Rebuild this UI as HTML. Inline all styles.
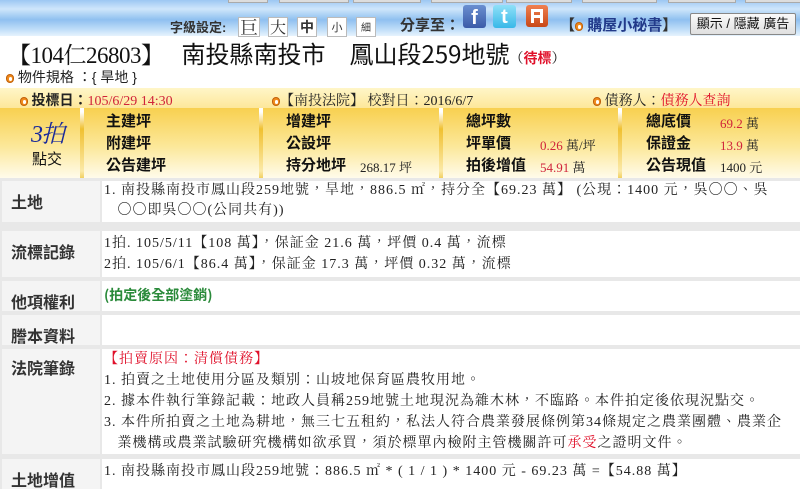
<!DOCTYPE html>
<html><head><meta charset="utf-8"><style>
*{margin:0;padding:0;box-sizing:border-box}
body{width:800px;height:489px;overflow:hidden;background:#fff;font-family:"Liberation Serif","Noto Serif CJK TC","Noto Sans CJK TC",serif;color:#222;position:relative}
.abs{position:absolute;white-space:nowrap}
.top{position:absolute;left:0;top:0;width:800px;height:36px;background:linear-gradient(#9cc7f2 0%,#cfe6fb 25%,#8fc0f0 55%,#bcdcf8 80%,#e6f3fd 100%)}
.tab{position:absolute;top:0;height:3px;background:#ddd;border:1px solid #aaa;border-top:none}
.fb{position:absolute;top:17px;width:20px;height:20px;border:1px solid #bbb;background:#fff;font:14px "Noto Sans CJK TC",sans-serif;text-align:center;line-height:18px;color:#333}
.sans{font-family:"Liberation Sans","Noto Sans CJK TC",sans-serif}
.dot{display:inline-block;width:8px;height:9px;border-radius:4px;background:#f08a1c;border:1px solid #c0600a;vertical-align:middle;position:relative}
.dot:after{content:"";position:absolute;left:2px;top:2px;width:3px;height:4px;background:#fff;border-radius:2px}
.band{position:absolute;left:0;top:88px;width:800px;height:20px;background:linear-gradient(#fff6c8,#fde79a)}
.blk{position:absolute;left:0;top:108px;width:800px;height:70px;background:linear-gradient(#f8d050,#fce89a 55%,#fffbeb)}
.sep{position:absolute;top:108px;width:4px;height:70px;background:linear-gradient(#fff 0,#fff 4px,#f0c030 30%,#fbe9a8 90%,#f2d060)}
.k{font-family:"Liberation Sans","Noto Sans CJK TC",sans-serif;font-weight:bold;font-size:15px;color:#111}
.red{color:#d0233a}
.row{position:absolute;left:0;width:800px;background:#e8e8e8}
.lab{position:absolute;left:2px;top:0;width:98px;height:100%;background:#f4f4f4;font-family:"Liberation Sans","Noto Sans CJK TC",sans-serif;font-weight:bold;font-size:16px;color:#333;padding-left:9px}
.con{position:absolute;left:102px;top:0;right:0;height:100%;background:#fff;font-size:14px;color:#222;line-height:20px;padding-left:2px;letter-spacing:1px;white-space:nowrap;overflow:hidden}
</style></head><body>
<div class="top"></div>
<div class="tab" style="left:228px;width:40px"></div>
<div class="tab" style="left:279px;width:70px"></div>
<div class="tab" style="left:353px;width:68px"></div>
<div class="tab" style="left:431px;width:72px"></div>
<div class="tab" style="left:506px;width:66px"></div>
<div class="tab" style="left:582px;width:75px"></div>
<div class="tab" style="left:668px;width:68px"></div>
<div class="tab" style="left:745px;width:60px"></div>
<div class="abs sans" style="left:170px;top:17px;font-size:13px;font-weight:bold;color:#333">字級設定:</div>
<div class="fb" style="left:238px;width:22px;font-size:18px;font-family:'Noto Serif CJK TC',serif">巨</div>
<div class="fb" style="left:268px;font-size:16px;font-family:'Noto Serif CJK TC',serif">大</div>
<div class="fb" style="left:297px;font-weight:bold">中</div>
<div class="fb" style="left:327px;font-size:11px">小</div>
<div class="fb" style="left:356px;font-size:10px">細</div>
<div class="abs sans" style="left:400px;top:14px;font-size:15px;font-weight:bold;color:#333">分享至：</div>
<div class="abs" style="left:463px;top:5px;width:23px;height:23px;background:linear-gradient(#6a8fd0,#3b5ba8);border-radius:3px;color:#fff;font:bold 20px 'Liberation Sans';text-align:center;line-height:26px">f</div>
<div class="abs" style="left:493px;top:5px;width:23px;height:23px;background:linear-gradient(#8fe0f8,#38b8e8);border-radius:3px;color:#fff;font:bold 20px 'Liberation Sans';text-align:center;line-height:24px">t</div>
<div class="abs" style="left:526px;top:5px;width:22px;height:22px;background:linear-gradient(#f08050,#c84818);border-radius:3px;"><div style="position:absolute;left:5px;top:4px;width:12px;height:14px;border:3px solid #fff;border-bottom:none"></div><div style="position:absolute;left:5px;top:10px;width:12px;height:3px;background:#fff"></div></div>
<div class="abs sans" style="left:560px;top:14px;font-size:15px;font-weight:bold;color:#333">【<span class="dot"></span> <span style="color:#223a8a">購屋小秘書</span>】</div>
<div class="abs sans" style="left:690px;top:13px;width:106px;height:22px;background:linear-gradient(#fafafa,#e0e0e0);border:1px solid #888;border-radius:2px;font-size:13px;text-align:center;line-height:20px;color:#111">顯示 / 隱藏 廣告</div>

<div class="abs" style="left:8px;top:38px;font-size:23px;color:#111;line-height:30px;letter-spacing:-0.5px">【104仁26803】<span style="font-family:'Noto Sans CJK TC',sans-serif;font-size:24px;letter-spacing:0;margin-left:18px">南投縣南投市　鳳山段259地號</span><span style="font-size:14px;letter-spacing:0">（<span style="color:#e0102a;font-family:'Noto Sans CJK TC',sans-serif;font-weight:bold">待標</span>）</span></div>
<div class="abs sans" style="left:6px;top:67px;font-size:14px;color:#222"><span class="dot"></span> 物件規格 ：{ 旱地 }</div>

<div class="band"></div>
<div class="abs" style="left:20px;top:90px;font-size:14px"><span class="dot"></span> <b class="sans" style="color:#222">投標日：</b><span class="red">105/6/29 14:30</span></div>
<div class="abs" style="left:272px;top:90px;font-size:14px"><span class="dot"></span>【南投法院】 校對日：2016/6/7</div>
<div class="abs" style="left:593px;top:90px;font-size:14px"><span class="dot"></span> 債務人：<span style="color:#e0102a">債務人查詢</span></div>

<div class="blk"></div>
<div class="sep" style="left:80px"></div>
<div class="sep" style="left:259px"></div>
<div class="sep" style="left:439px"></div>
<div class="sep" style="left:618px"></div>
<div class="abs" style="left:31px;top:114px;font-size:24px;font-style:italic;color:#1a2a9a;letter-spacing:-2px">3拍</div>
<div class="abs sans" style="left:32px;top:148px;font-size:15px;color:#111">點交</div>
<div class="abs k" style="left:106px;top:111px;line-height:22px">主建坪<br>附建坪<br>公告建坪</div>
<div class="abs k" style="left:286px;top:111px;line-height:22px">增建坪<br>公設坪<br>持分地坪</div>
<div class="abs" style="left:360px;top:157px;font-size:13px">268.17 坪</div>
<div class="abs k" style="left:466px;top:111px;line-height:22px">總坪數<br>坪單價<br>拍後增值</div>
<div class="abs" style="left:540px;top:135px;font-size:13px"><span class="red">0.26</span> 萬/坪</div>
<div class="abs" style="left:540px;top:157px;font-size:13px"><span class="red">54.91</span> 萬</div>
<div class="abs k" style="left:646px;top:111px;line-height:22px">總底價<br>保證金<br>公告現值</div>
<div class="abs" style="left:720px;top:113px;font-size:13px"><span class="red">69.2</span> 萬</div>
<div class="abs" style="left:720px;top:135px;font-size:13px"><span class="red">13.9</span> 萬</div>
<div class="abs" style="left:720px;top:157px;font-size:13px">1400 元</div>

<div class="row" style="top:178px;height:311px"></div>
<div class="row" style="top:181px;height:41px"><div class="lab" style="padding-top:8px">土地</div><div class="con">1. 南投縣南投市鳳山段259地號，旱地，886.5 ㎡，持分全【69.23 萬】 (公現：1400 元，吳〇〇、吳<br>&nbsp;&nbsp;&nbsp;〇〇即吳〇〇(公同共有))</div></div>
<div class="row" style="top:231px;height:46px"><div class="lab" style="padding-top:8px">流標記錄</div><div class="con" style="padding-top:2px;line-height:21px">1拍. 105/5/11【108 萬】，保証金 21.6 萬，坪價 0.4 萬，流標<br>2拍. 105/6/1【86.4 萬】，保証金 17.3 萬，坪價 0.32 萬，流標</div></div>
<div class="row" style="top:281px;height:30px"><div class="lab" style="padding-top:8px">他項權利</div><div class="con" style="padding-top:4px;color:#2a8a3a;font-weight:bold;font-family:'Noto Sans CJK TC',sans-serif;letter-spacing:0">(拍定後全部塗銷)</div></div>
<div class="row" style="top:315px;height:30px"><div class="lab" style="padding-top:8px">謄本資料</div><div class="con"></div></div>
<div class="row" style="top:349px;height:105px"><div class="lab" style="padding-top:6px">法院筆錄</div><div class="con" style="padding-top:0;line-height:21px"><span style="color:#e0102a">【拍賣原因：清償債務】</span><br>1. 拍賣之土地使用分區及類別：山坡地保育區農牧用地。<br>2. 據本件執行筆錄記載：地政人員稱259地號土地現況為雜木林，不臨路。本件拍定後依現況點交。<br>3. 本件所拍賣之土地為耕地，無三七五租約，私法人符合農業發展條例第34條規定之農業團體、農業企<br>&nbsp;&nbsp;&nbsp;業機構或農業試驗研究機構如欲承買，須於標單內檢附主管機關許可<span style="color:#e0102a">承受</span>之證明文件。</div></div>
<div class="row" style="top:459px;height:30px"><div class="lab" style="padding-top:8px">土地增值</div><div class="con" style="padding-top:3px">1. 南投縣南投市鳳山段259地號：886.5 ㎡ * ( 1 / 1 ) * 1400 元 - 69.23 萬 =【54.88 萬】</div></div>
</body></html>
